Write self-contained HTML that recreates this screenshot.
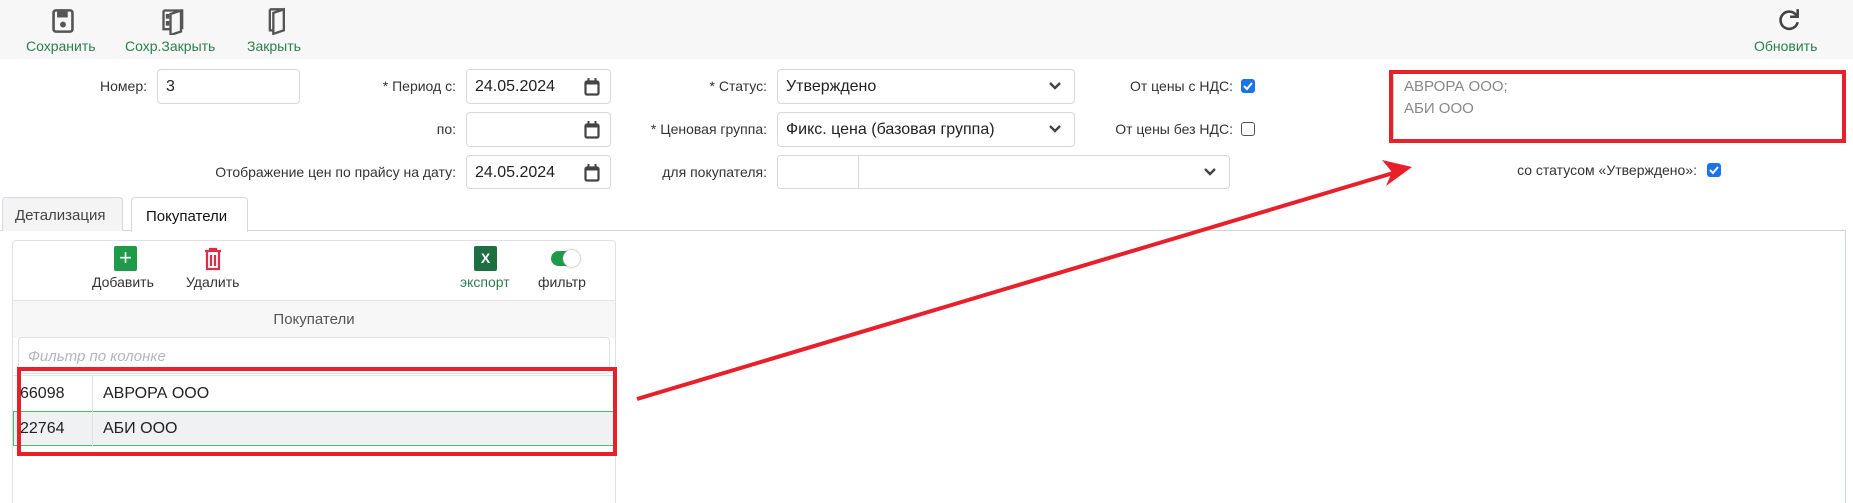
<!DOCTYPE html>
<html><head><meta charset="utf-8"><style>
*{box-sizing:border-box;margin:0;padding:0}
html,body{width:1853px;height:503px;overflow:hidden}
body{background:#fff;font-family:"Liberation Sans","DejaVu Sans",sans-serif;color:#333;position:relative}
.a{position:absolute}
.tb{left:0;top:0;width:1853px;height:59px;background:#f7f7f7}
.tl{font-size:14px;color:#2e7d4f;top:38px;white-space:nowrap}
.lbl{font-size:14px;color:#333;text-align:right;white-space:nowrap}
.inp{border:1px solid #d8d8e0;border-radius:4px;background:#fff;font-size:16px;color:#222;padding:8px 0 0 8px}
.red{border:4px solid #e8202a}
.chev{position:absolute;right:12px;top:9px}
.cal{position:absolute;right:10px;top:8px}
.cb{width:14px;height:14px;border-radius:3px}
</style></head><body>
<div class="a tb"></div>
<svg class="a" style="left:51px;top:8px" width="24" height="26" viewBox="0 0 20 22"><rect x="2" y="2" width="16" height="18" rx="2" fill="none" stroke="#555" stroke-width="2.2"/><rect x="5" y="3" width="9" height="5" fill="#555"/><circle cx="10" cy="14" r="2.5" fill="#555"/></svg>
<svg class="a" style="left:161px;top:7px" width="26" height="28" viewBox="0 0 22 24"><path d="M2 3h16v16M2 3v16h6M8 6l9-3v18l-9 3z" fill="none" stroke="#555" stroke-width="2"/><rect x="4" y="6" width="3" height="4" fill="#555"/><rect x="4" y="12" width="3" height="4" fill="#555"/></svg>
<svg class="a" style="left:266px;top:7px" width="24" height="28" viewBox="0 0 20 24"><path d="M3 2h12v17M3 2v18h3M6 5l9-3v18l-9 3z" fill="none" stroke="#555" stroke-width="2"/></svg>
<svg class="a" style="left:1776px;top:7px" width="26" height="26" viewBox="0 0 24 24"><path d="M19 8A8 8 0 1 0 20 14" fill="none" stroke="#444" stroke-width="2.4"/><path d="M20 2v7h-7" fill="none" stroke="#444" stroke-width="2.4"/></svg>
<div class="a tl" style="left:26px">Сохранить</div>
<div class="a tl" style="left:125px">Сохр.Закрыть</div>
<div class="a tl" style="left:247px">Закрыть</div>
<div class="a tl" style="left:1754px">Обновить</div>

<div class="a lbl" style="right:1706px;top:78px">Номер:</div>
<div class="a inp" style="left:157px;top:69px;width:143px;height:35px">3</div>
<div class="a lbl" style="right:1397px;top:78px">* Период с:</div>
<div class="a lbl" style="right:1397px;top:121px">по:</div>
<div class="a lbl" style="right:1397px;top:164px">Отображение цен по прайсу на дату:</div>
<div class="a inp" style="left:466px;top:69px;width:145px;height:35px">24.05.2024<svg class="cal" width="16" height="18" viewBox="0 0 16 18"><rect x="1.5" y="3.5" width="13" height="13" rx="1.5" fill="none" stroke="#444" stroke-width="2.2"/><rect x="1.5" y="3.5" width="13" height="3" fill="#444"/><path d="M4.5 0v5M11.5 0v5" stroke="#444" stroke-width="2"/></svg></div>
<div class="a inp" style="left:466px;top:112px;width:145px;height:35px"><svg class="cal" width="16" height="18" viewBox="0 0 16 18"><rect x="1.5" y="3.5" width="13" height="13" rx="1.5" fill="none" stroke="#444" stroke-width="2.2"/><rect x="1.5" y="3.5" width="13" height="3" fill="#444"/><path d="M4.5 0v5M11.5 0v5" stroke="#444" stroke-width="2"/></svg></div>
<div class="a inp" style="left:466px;top:155px;width:145px;height:34px">24.05.2024<svg class="cal" width="16" height="18" viewBox="0 0 16 18"><rect x="1.5" y="3.5" width="13" height="13" rx="1.5" fill="none" stroke="#444" stroke-width="2.2"/><rect x="1.5" y="3.5" width="13" height="3" fill="#444"/><path d="M4.5 0v5M11.5 0v5" stroke="#444" stroke-width="2"/></svg></div>

<div class="a lbl" style="right:1086px;top:78px">* Статус:</div>
<div class="a lbl" style="right:1086px;top:121px">* Ценовая группа:</div>
<div class="a lbl" style="right:1086px;top:164px">для покупателя:</div>
<div class="a inp" style="left:777px;top:69px;width:298px;height:35px">Утверждено<svg class="chev" width="14" height="14" viewBox="0 0 14 14"><path d="M2 4l5 5 5-5" fill="none" stroke="#444" stroke-width="2.4"/></svg></div>
<div class="a inp" style="left:777px;top:112px;width:298px;height:35px">Фикс. цена (базовая группа)<svg class="chev" width="14" height="14" viewBox="0 0 14 14"><path d="M2 4l5 5 5-5" fill="none" stroke="#444" stroke-width="2.4"/></svg></div>
<div class="a inp" style="left:777px;top:155px;width:453px;height:34px"><div class="a" style="left:80px;top:0;width:1px;height:32px;background:#d8d8e0"></div><svg class="chev" width="14" height="14" viewBox="0 0 14 14"><path d="M2 4l5 5 5-5" fill="none" stroke="#444" stroke-width="2.4"/></svg></div>

<div class="a lbl" style="right:620px;top:78px">От цены с НДС:</div>
<div class="a lbl" style="right:620px;top:121px">От цены без НДС:</div>
<div class="a cb" style="left:1241px;top:79px;background:#1a73e8"><svg width="14" height="14" viewBox="0 0 14 14"><path d="M3 7l3 3 5-6" fill="none" stroke="#fff" stroke-width="2"/></svg></div>
<div class="a cb" style="left:1241px;top:122px;border:1.5px solid #555"></div>

<div class="a" style="left:1393px;top:74px;width:449px;height:64px;border-left:1px solid #ccc;font-size:15px;color:#888;line-height:22px;padding:2px 0 0 10px">АВРОРА ООО;<br>АБИ ООО</div>
<div class="a red" style="left:1389px;top:70px;width:457px;height:73px"></div>
<div class="a lbl" style="right:156px;top:162px">со статусом «Утверждено»:</div>
<div class="a cb" style="left:1707px;top:163px;background:#1a73e8"><svg width="14" height="14" viewBox="0 0 14 14"><path d="M3 7l3 3 5-6" fill="none" stroke="#fff" stroke-width="2"/></svg></div>

<div class="a" style="left:0;top:230px;width:1846px;height:1px;background:#d0d4dc"></div>
<div class="a" style="left:1845px;top:230px;width:1px;height:273px;background:#d0d4dc"></div>
<div class="a" style="left:2px;top:197px;width:121px;height:34px;background:#f4f4f4;border:1px solid #d8d8e0;border-bottom:none;border-radius:4px 4px 0 0;font-size:15px;padding:9px 0 0 12px;color:#444">Детализация</div>
<div class="a" style="left:131px;top:197px;width:117px;height:35px;background:#fff;border:1px solid #d8d8e0;border-bottom:none;border-radius:4px 4px 0 0;font-size:15px;padding:10px 0 0 14px;color:#111">Покупатели</div>

<div class="a" style="left:12px;top:240px;width:604px;height:263px;border:1px solid #dde0e6;border-bottom:none;border-radius:4px 4px 0 0"></div>
<div class="a" style="left:114px;top:246px;width:23px;height:25px;background:#1e9a4a;border-radius:2px;color:#fff;font-size:22px;line-height:24px;text-align:center">+</div>
<svg class="a" style="left:203px;top:247px" width="20" height="24" viewBox="0 0 20 24"><path d="M2 4h16M7 4V2h6v2M4 5v17h12V5M8 8v11M12 8v11" fill="none" stroke="#d9304a" stroke-width="2.2"/></svg>
<div class="a" style="left:474px;top:246px;width:23px;height:25px;background:#1d6f42;border-radius:2px;color:#fff;font-size:14px;font-weight:bold;line-height:25px;text-align:center">X</div>
<div class="a" style="left:551px;top:251px;width:27px;height:15px;background:#1e9a4a;border-radius:8px"></div>
<div class="a" style="left:563px;top:250px;width:17px;height:17px;background:#fff;border-radius:50%;box-shadow:0 0 2px #888"></div>
<div class="a" style="left:92px;top:274px;font-size:14px;color:#333">Добавить</div>
<div class="a" style="left:186px;top:274px;font-size:14px;color:#333">Удалить</div>
<div class="a" style="left:460px;top:274px;font-size:14px;color:#2e7d4f">экспорт</div>
<div class="a" style="left:538px;top:274px;font-size:14px;color:#333">фильтр</div>
<div class="a" style="left:13px;top:300px;width:602px;height:38px;background:#f7f7f7;border-top:1px solid #e2e4e8;font-size:15px;color:#555;text-align:center;padding-top:10px">Покупатели</div>
<div class="a" style="left:18px;top:337px;width:592px;height:37px;border:1px solid #dde0e6;border-radius:4px;font-size:15px;color:#b0b6c0;font-style:italic;padding:10px 0 0 9px">Фильтр по колонке</div>
<div class="a" style="left:13px;top:375px;width:602px;height:1px;background:#e2e4e8"></div>
<div class="a" style="left:13px;top:411px;width:602px;height:35px;background:#f0f1f3;border:1px solid #4cbb6a"></div>
<div class="a" style="left:92px;top:376px;width:1px;height:70px;background:#e0e0e0"></div>
<div class="a" style="left:20px;top:385px;font-size:16px;color:#222">66098</div>
<div class="a" style="left:103px;top:385px;font-size:16px;color:#222">АВРОРА ООО</div>
<div class="a" style="left:20px;top:420px;font-size:16px;color:#222">22764</div>
<div class="a" style="left:103px;top:420px;font-size:16px;color:#222">АБИ ООО</div>
<div class="a red" style="left:17px;top:367px;width:600px;height:89px"></div>

<svg class="a" style="left:0;top:0" width="1853" height="503"><path d="M637 399L1400 171" stroke="#e8202a" stroke-width="4" fill="none"/><path d="M1412 167L1382 160L1392 172L1386 186Z" fill="#e8202a"/></svg>
</body></html>
